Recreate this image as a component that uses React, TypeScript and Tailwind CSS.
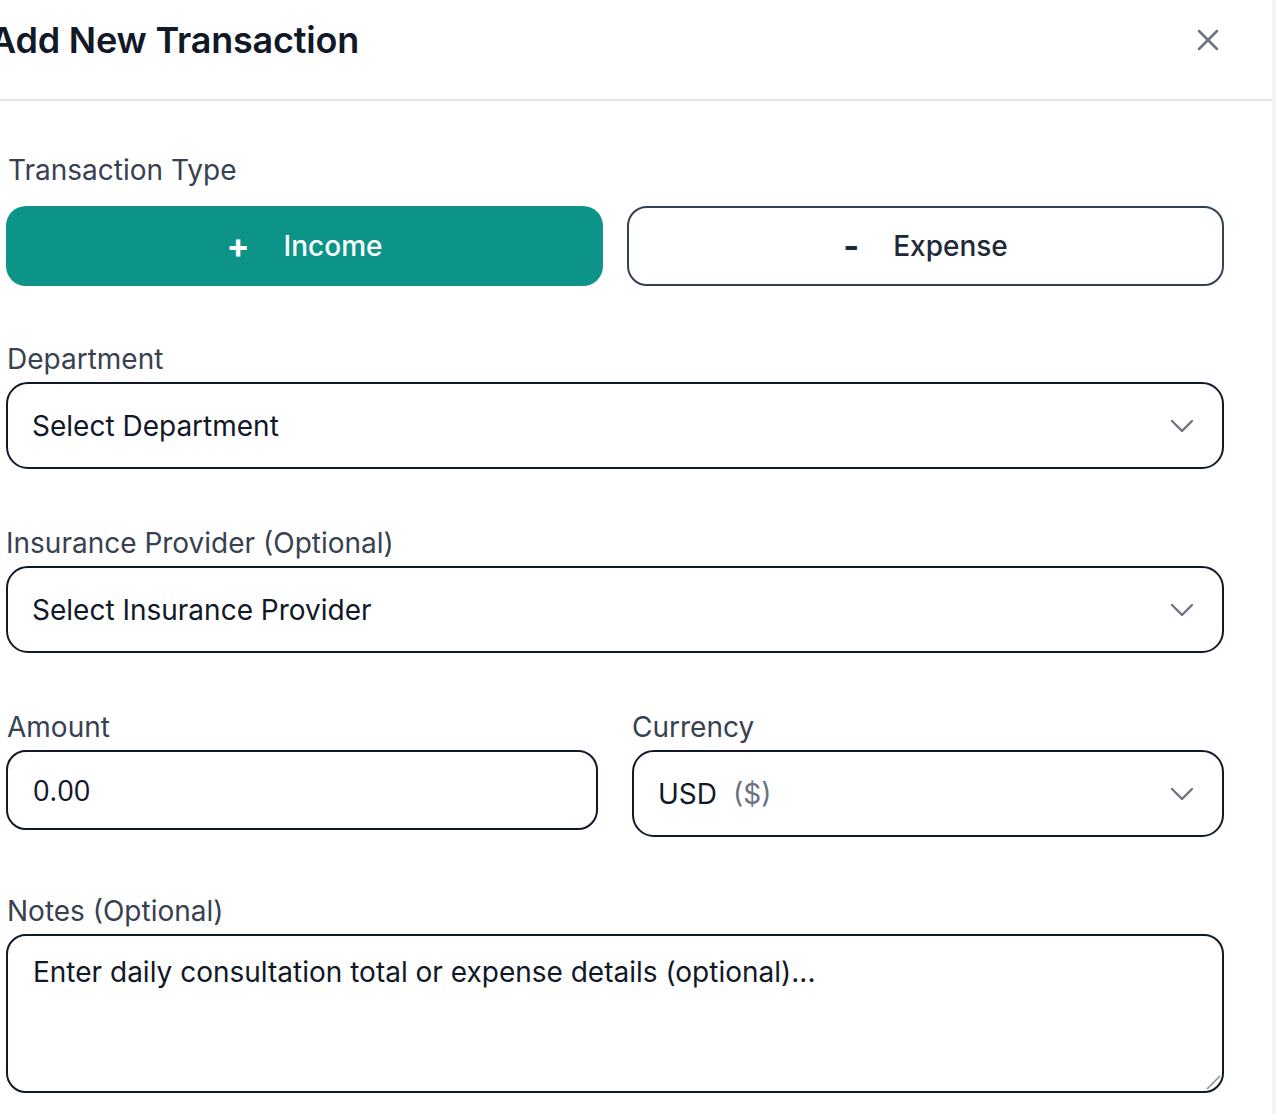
import React from 'react'
import { X, ChevronDown } from 'lucide-react'

const inter = "font-['Inter','Noto_Sans',sans-serif]"

const Chevron = () => (
  <ChevronDown size={40} strokeWidth={1.4} className="text-[#6b7280] shrink-0" />
)

const SelectBox = ({ children }: { children: React.ReactNode }) => (
  <button
    className="flex items-center justify-between w-full h-[87px] pl-[24px] pr-[20px] border-2 border-[#111827] rounded-[22px] bg-white text-left">
    {children}
    <Chevron />
  </button>
)

export default function App() {
  return (
    <div className={`${inter} flex w-[1276px] h-[1114px] overflow-hidden bg-white`}>
      <div className="w-[1272px] h-full">
        <div className="flex items-center justify-between h-[101px] pb-[20px] border-b-2 border-[#e5e7eb] pr-[46px]">
          <h2 className="ml-[-10px] text-[36px] leading-[44px] font-semibold text-[#111827] tracking-[-0.2px]">
            Add New Transaction
          </h2>
          <X size={36} strokeWidth={1.7} className="text-[#6b7280]" />
        </div>

        <div className="w-[1224px] pl-[6px] pt-[49px]">
          <p className="pl-[2px] text-[28px] leading-[40px] text-[#374151]">Transaction Type</p>
          <div className="grid grid-cols-2 gap-[24px] mt-[16px]">
            <button className="h-[80px] rounded-[20px] bg-[#0d9488] text-white text-[28px] font-medium flex items-center justify-center gap-[34px]">
              <span className="text-[34px] font-bold leading-none">+</span>
              <span>Income</span>
            </button>
            <button className="h-[80px] rounded-[20px] border-2 border-[#334155] bg-white text-[#1f2937] text-[28px] font-medium flex items-center justify-center gap-[34px]">
              <span className="text-[34px] font-bold leading-none">-</span>
              <span>Expense</span>
            </button>
          </div>

          <div className="mt-[53px]">
            <p className="pl-[1px] text-[28px] leading-[40px] text-[#374151]">Department</p>
            <div className="mt-[3px]">
              <SelectBox>
                <span className="text-[28px] text-[#111827]">Select Department</span>
              </SelectBox>
            </div>
          </div>

          <div className="mt-[54px]">
            <p className="text-[28px] leading-[40px] text-[#374151]">Insurance Provider (Optional)</p>
            <div className="mt-[3px]">
              <SelectBox>
                <span className="text-[28px] text-[#111827]">Select Insurance Provider</span>
              </SelectBox>
            </div>
          </div>

          <div className="mt-[54px] grid grid-cols-2 gap-[34px]">
            <div>
              <p className="pl-[1px] text-[28px] leading-[40px] text-[#374151]">Amount</p>
              <div className="mt-[3px] h-[80px] border-2 border-[#111827] rounded-[20px] flex items-center pl-[25px]">
                <span className="font-['Open_Sans','Noto_Sans',sans-serif] text-[29px] text-[#111827]">0.00</span>
              </div>
            </div>
            <div>
              <p className="text-[28px] leading-[40px] text-[#374151]">Currency</p>
              <div className="mt-[3px]">
                <SelectBox>
                  <span className="text-[28px] text-[#111827] flex gap-[16px]">
                    USD <span className="text-[#6b7280]">($)</span>
                  </span>
                </SelectBox>
              </div>
            </div>
          </div>

          <div className="mt-[54px]">
            <p className="pl-[1px] text-[28px] leading-[40px] text-[#374151]">Notes (Optional)</p>
            <div className="relative mt-[3px]">
              <textarea
                placeholder="Enter daily consultation total or expense details (optional)..."
                className={`${inter} block w-full h-[159px] resize-none border-2 border-[#111827] rounded-[20px] px-[25px] pt-[16px] text-[28px] leading-[40px] text-[#111827] placeholder:text-[#111827] outline-none`}
              />
              <svg className="absolute right-[2px] bottom-[2px]" width="18" height="18" viewBox="0 0 18 18">
                <path d="M3 16 16 3" stroke="#8a8f98" strokeWidth="1.6" />
              </svg>
            </div>
          </div>
        </div>
      </div>
      <div className="w-[4px] h-full bg-[#f3f4f6]" />
    </div>
  )
}
